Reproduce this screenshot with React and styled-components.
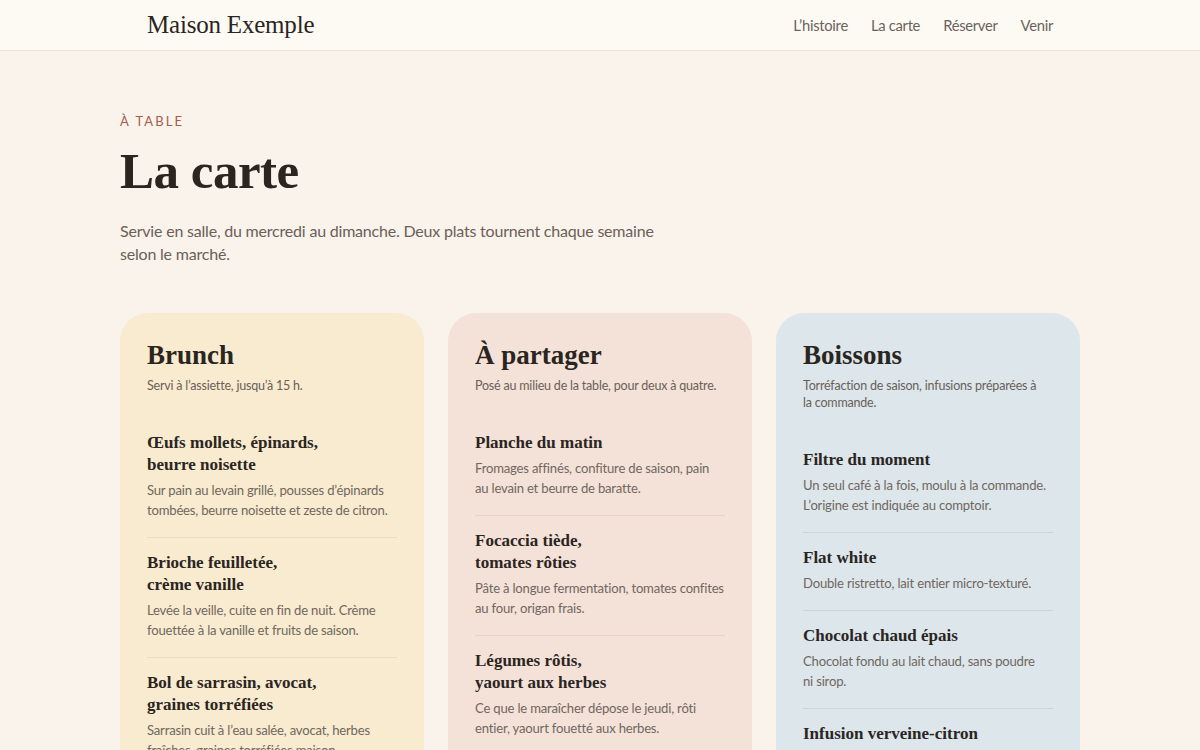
import React from "react";
import styled, { createGlobalStyle } from "styled-components";

const GlobalStyle = createGlobalStyle`
  html, body { margin: 0; padding: 0; }
  body {
    background: #faf3ec;
    font-family: Lato, "Noto Sans", sans-serif;
    color: #2b251f;
    -webkit-font-smoothing: antialiased;
  }
  * { box-sizing: border-box; }
`;

const serif = `"Liberation Serif", "DejaVu Serif", serif`;

const Header = styled.header`
  height: 51px;
  background: #fdfaf4;
  border-bottom: 1px solid #ebe3d8;
`;

const HeaderInner = styled.div`
  height: 100%;
  padding: 0 147px;
  display: flex;
  align-items: center;
  justify-content: space-between;
`;

const Logo = styled.a`
  font-family: ${serif};
  font-size: 25px;
  color: #2b251f;
  text-decoration: none;
  letter-spacing: -0.2px;
`;

const Nav = styled.nav`
  display: flex;
  gap: 23px;
`;

const NavLink = styled.a`
  font-size: 14.8px;
  letter-spacing: -0.3px;
  color: #6a635c;
  text-decoration: none;
`;

const Main = styled.main`
  width: 960px;
  margin: 0 auto;
  padding: 61px 0 0;
`;

const Eyebrow = styled.div`
  font-size: 13px;
  letter-spacing: 2.1px;
  text-transform: uppercase;
  color: #a65c4c;
  line-height: 18px;
`;

const Title = styled.h1`
  margin: 9px 0 0;
  font-family: ${serif};
  font-weight: 700;
  font-size: 51px;
  line-height: 64px;
  color: #2b251f;
  letter-spacing: -0.5px;
`;

const Lead = styled.p`
  margin: 16px 0 0;
  max-width: 560px;
  font-size: 16px;
  letter-spacing: -0.2px;
  line-height: 23px;
  color: #6a6058;
`;

const Grid = styled.div`
  margin-top: 48px;
  display: grid;
  grid-template-columns: repeat(3, 1fr);
  gap: 24px;
  align-items: start;
`;

const Card = styled.section`
  background: ${(p) => p.$tone};
  border-radius: 28px;
  padding: 27px 27px 28px;
  min-height: 460px;
`;

const CardTitle = styled.h2`
  margin: 0;
  font-family: ${serif};
  font-weight: 700;
  font-size: 27px;
  line-height: 31px;
  color: #2b251f;
`;

const CardNote = styled.p`
  margin: 6px 0 24px;
  font-size: 12.5px;
  letter-spacing: -0.2px;
  line-height: 17px;
  color: #6a6058;
  white-space: nowrap;
`;

const Item = styled.article`
  padding: 14px 0 17px;
  border-bottom: 1px solid ${(p) => p.$rule};
  &:last-child { border-bottom: none; }
`;

const ItemName = styled.h3`
  margin: 0;
  font-family: ${serif};
  font-weight: 700;
  font-size: 17px;
  line-height: 22px;
  color: #2b251f;
`;

const ItemDesc = styled.p`
  margin: 4px 0 0;
  font-size: 13.1px;
  letter-spacing: -0.2px;
  line-height: 20px;
  color: #71675e;
  white-space: nowrap;
`;

const Lines = ({ lines }) =>
  lines.map((line, i) => (
    <React.Fragment key={line}>
      {i > 0 && <br />}
      {line}
    </React.Fragment>
  ));

const sections = [
  {
    title: "Brunch",
    note: ["Servi à l’assiette, jusqu’à 15 h."],
    tone: "#f8ebd0",
    rule: "#ecdcbd",
    items: [
      {
        name: ["Œufs mollets, épinards,", "beurre noisette"],
        desc: ["Sur pain au levain grillé, pousses d’épinards", "tombées, beurre noisette et zeste de citron."],
      },
      {
        name: ["Brioche feuilletée,", "crème vanille"],
        desc: ["Levée la veille, cuite en fin de nuit. Crème", "fouettée à la vanille et fruits de saison."],
      },
      {
        name: ["Bol de sarrasin, avocat,", "graines torréfiées"],
        desc: ["Sarrasin cuit à l’eau salée, avocat, herbes", "fraîches, graines torréfiées maison."],
      },
    ],
  },
  {
    title: "À partager",
    note: ["Posé au milieu de la table, pour deux à quatre."],
    tone: "#f4e2d9",
    rule: "#e8d1c6",
    items: [
      {
        name: ["Planche du matin"],
        desc: ["Fromages affinés, confiture de saison, pain", "au levain et beurre de baratte."],
      },
      {
        name: ["Focaccia tiède,", "tomates rôties"],
        desc: ["Pâte à longue fermentation, tomates confites", "au four, origan frais."],
      },
      {
        name: ["Légumes rôtis,", "yaourt aux herbes"],
        desc: ["Ce que le maraîcher dépose le jeudi, rôti", "entier, yaourt fouetté aux herbes."],
      },
    ],
  },
  {
    title: "Boissons",
    note: ["Torréfaction de saison, infusions préparées à", "la commande."],
    tone: "#dce6eb",
    rule: "#c9d6dd",
    items: [
      {
        name: ["Filtre du moment"],
        desc: ["Un seul café à la fois, moulu à la commande.", "L’origine est indiquée au comptoir."],
      },
      {
        name: ["Flat white"],
        desc: ["Double ristretto, lait entier micro-texturé."],
      },
      {
        name: ["Chocolat chaud épais"],
        desc: ["Chocolat fondu au lait chaud, sans poudre", "ni sirop."],
      },
      {
        name: ["Infusion verveine-citron"],
        desc: ["Verveine fraîche du jardin, zeste de citron,", "miel à part."],
      },
    ],
  },
];

export default function App() {
  return (
    <>
      <GlobalStyle />
      <Header>
        <HeaderInner>
          <Logo href="#">Maison Exemple</Logo>
          <Nav>
            <NavLink href="#">L’histoire</NavLink>
            <NavLink href="#">La carte</NavLink>
            <NavLink href="#">Réserver</NavLink>
            <NavLink href="#">Venir</NavLink>
          </Nav>
        </HeaderInner>
      </Header>
      <Main>
        <Eyebrow>À table</Eyebrow>
        <Title>La carte</Title>
        <Lead>
          Servie en salle, du mercredi au dimanche. Deux plats tournent chaque
          semaine selon le marché.
        </Lead>
        <Grid>
          {sections.map((s) => (
            <Card key={s.title} $tone={s.tone}>
              <CardTitle>{s.title}</CardTitle>
              <CardNote>
                <Lines lines={s.note} />
              </CardNote>
              {s.items.map((it) => (
                <Item key={it.name.join(" ")} $rule={s.rule}>
                  <ItemName>
                    <Lines lines={it.name} />
                  </ItemName>
                  <ItemDesc>
                    <Lines lines={it.desc} />
                  </ItemDesc>
                </Item>
              ))}
            </Card>
          ))}
        </Grid>
      </Main>
    </>
  );
}
